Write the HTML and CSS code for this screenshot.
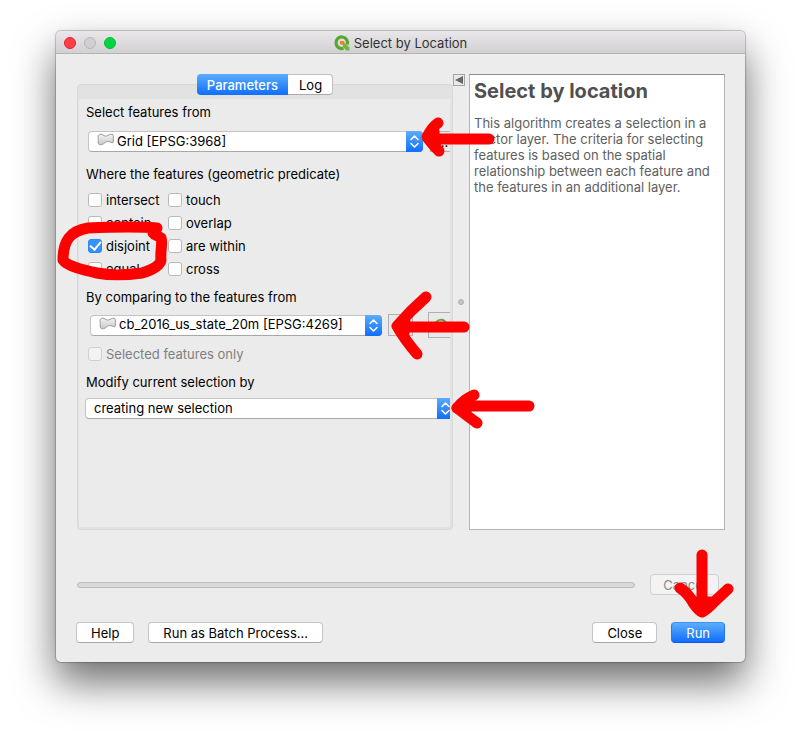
FILE: index.html
```html
<!DOCTYPE html>
<html lang="en">
<head>
<meta charset="utf-8">
<title>Select by Location</title>
<link rel="stylesheet" href="styles.css">
</head>
<body>
<svg class="defs" aria-hidden="true">
  <defs>
    <linearGradient id="poly-fill" x1="0" y1="0" x2="0" y2="1"><stop offset="0" stop-color="#f4f4f4"/><stop offset="1" stop-color="#c6c6c6"/></linearGradient>
    <symbol id="polygon" viewBox="0 0 17 13"><path d="M1.5 2.2C3 .8 5 1 6 2c1.500 1.300 3.500 1.300 5 .5 1.500-1.200 4-1.700 5-.7.8 1 .3 3 .2 4.200.2 1.300.6 3-.2 3.600-1.500.6-2.500-.8-4-1-2-.2-3.200.4-4.500 1.400C6 11.500 3.500 12.300 2 11.300.6 10 1.300 8 1.300 6.500 1.200 5 .7 3.200 1.500 2.200z" fill="url(#poly-fill)" stroke="#999"/></symbol>
    <symbol id="updown" viewBox="0 0 17 21"><path d="M5 8.500 8.500 5 12 8.500M5 12.500 8.500 16 12 12.500" fill="none" stroke="#fff" stroke-width="1.500" stroke-linecap="round" stroke-linejoin="round"/></symbol>
  </defs>
</svg>
<main class="window">
  <header class="titlebar">
    <div class="lights">
      <button class="light red" aria-label="Close window"></button>
      <button class="light gray" aria-label="Minimize" disabled></button>
      <button class="light green" aria-label="Zoom"></button>
    </div>
    <h1 class="title">
      <svg class="logo" viewBox="0 0 16 16" aria-hidden="true">
        <path d="M9.500 13.300A5.800 5.800 0 1 1 13.300 9.500" fill="none" stroke="#58a732" stroke-width="3.200"/>
        <path d="M9 8.500h2.500l4 4V15.500h-3.200L9 12z" fill="#72b83b"/>
        <path d="M6 6h3.500l1 1v3H9L6 9z" fill="#ef8125"/>
      </svg>
      Select by Location
    </h1>
  </header>
  <div class="content">
    <div class="panels">
      <section class="left">
        <div class="tabs" role="tablist">
          <button class="tab active" role="tab" aria-selected="true">Parameters</button>
          <button class="tab" role="tab" aria-selected="false">Log</button>
        </div>
        <div class="pane">
          <form class="form">
            <label class="caption" for="source">Select features from</label>
            <div class="row source-row">
              <div class="combo">
                <svg class="poly"><use href="#polygon"/></svg>
                <select id="source" class="with-icon"><option>Grid [EPSG:3968]</option></select>
                <span class="arrows"><svg><use href="#updown"/></svg></span>
              </div>
              <button type="button" class="tool short" aria-label="Browse for a layer">…</button>
            </div>
            <div class="caption predicates-caption" id="predicates">Where the features (geometric predicate)</div>
            <div class="checks" role="group" aria-labelledby="predicates">
              <label class="check"><input type="checkbox">intersect</label>
              <label class="check"><input type="checkbox">touch</label>
              <label class="check"><input type="checkbox">contain</label>
              <label class="check"><input type="checkbox">overlap</label>
              <label class="check"><input type="checkbox" checked>disjoint</label>
              <label class="check"><input type="checkbox">are within</label>
              <label class="check"><input type="checkbox">equal</label>
              <label class="check"><input type="checkbox">cross</label>
            </div>
            <label class="caption compare-caption" for="compare">By comparing to the features from</label>
            <div class="row compare-row">
              <div class="combo">
                <svg class="poly"><use href="#polygon"/></svg>
                <select id="compare" class="with-icon"><option>cb_2016_us_state_20m [EPSG:4269]</option></select>
                <span class="arrows"><svg><use href="#updown"/></svg></span>
              </div>
              <button type="button" class="tool" aria-label="Browse for a comparison layer">…</button>
              <button type="button" class="tool tall" aria-label="Iterate over this layer">
                <svg class="iterate" viewBox="0 0 16 16"><path d="M2.500 8A5.500 5.500 0 0 1 13 6" fill="none" stroke="#5ba645" stroke-width="2"/><path d="M1 8h6l-3 4z" fill="#775522"/></svg>
              </button>
            </div>
            <label class="check only"><input type="checkbox" disabled>Selected features only</label>
            <label class="caption modify-caption" for="modify">Modify current selection by</label>
            <div class="combo modify">
              <select id="modify"><option>creating new selection</option></select>
              <span class="arrows"><svg><use href="#updown"/></svg></span>
            </div>
          </form>
        </div>
      </section>
      <div class="splitter">
        <button class="collapse" aria-label="Collapse help"><svg viewBox="0 0 10 10"><path d="M9 1v8L1 5z" fill="#666"/></svg></button>
        <span class="grip"></span>
      </div>
      <article class="help">
        <h2>Select by location</h2>
        <p>This algorithm creates a selection in a vector layer. The criteria for selecting features is based on the spatial relationship between each feature and the features in an additional layer.</p>
      </article>
    </div>
    <div class="progress-row">
      <div class="progress" role="progressbar" aria-label="Progress" aria-valuenow="0"></div>
      <button class="btn cancel" disabled>Cancel</button>
    </div>
    <footer class="actions">
      <button class="btn">Help</button>
      <button class="btn">Run as Batch Process…</button>
      <span class="spacer"></span>
      <button class="btn">Close</button>
      <button class="btn primary">Run</button>
    </footer>
  </div>
  <svg class="marks" viewBox="0 0 689 631" aria-hidden="true">
    <g transform="translate(-56 -31)" fill="none" stroke="#f00" stroke-width="11" stroke-linecap="round" stroke-linejoin="round">
      <path d="M489 139H430M438 123Q432 127 427 137Q431 143 439 151"/>
      <path d="M434 131 428 138 435 146z" fill="#f00"/>
      <path d="M464 327H400M426 297Q410 311 397 326Q405 340 417 354"/>
      <path d="M405 322 398 326 404 333z" fill="#f00"/>
      <path d="M529 406H460M474 395Q463 400 457 408Q466 415 477 423"/>
      <path d="M466 402 457 408 466 412z" fill="#f00"/>
      <path d="M702 555V609M680 588Q688 593 694 604Q699 611 702 612Q708 609 714 602L728 589"/>
      <path d="M695 602 702 611 711 602z" fill="#f00"/>
      <path d="M157 228C135 226 110 227 88 228C70 231 63 241 63 260C67 266 83 270 97 273C112 276 128 275 142 273C152 270 160 266 161 260C160 250 163 243 161 238C158 235 155 236 153 233"/>
    </g>
  </svg>
</main>
</body>
</html>
```

FILE: styles.css
```css
* { box-sizing: border-box; }

body {
  margin: 0;
  min-height: 100vh;
  padding: 31px 56px 80px;
  display: flex;
  background: #fff;
  color: #000;
  font: 13px/16px Inter, "Liberation Sans", sans-serif;
}

button, select { font: inherit; color: inherit; margin: 0; }
svg { display: block; }
.defs { position: absolute; width: 0; height: 0; }

.window {
  position: relative;
  flex: 1;
  min-width: 0;
  display: flex;
  flex-direction: column;
  border-radius: 5px;
  background: #ececec;
  box-shadow: 0 0 1px 1px rgba(0, 0, 0, .22), 0 20px 40px rgba(0, 0, 0, .58);
}

.titlebar {
  position: relative;
  height: 23px;
  display: flex;
  align-items: center;
  justify-content: center;
  padding-top: 2px;
  border-bottom: 1px solid #b5b3b5;
  border-radius: 5px 5px 0 0;
  background: linear-gradient(#e9e7e9, #d2d0d2);
}
.lights { position: absolute; left: 8px; top: 6px; display: flex; gap: 8px; }
.light { width: 12px; height: 12px; padding: 0; border: 1px solid; border-radius: 50%; }
.red { background: #ff4048; border-color: #e5222d; }
.gray { background: #d1cfd1; border-color: #b8b6b8; }
.green { background: #00d543; border-color: #0bb932; }
.title { margin: 0; display: flex; align-items: center; gap: 4px; font-size: 13px; font-weight: 400; color: #333; }
.logo { width: 16px; height: 16px; }

.content { flex: 1; display: flex; flex-direction: column; padding: 20px 20px 19px 21px; }
.panels { flex: 1; display: grid; grid-template-columns: minmax(0, 376fr) 16px minmax(0, 256fr); }
.left { display: flex; flex-direction: column; }

.tabs { position: relative; z-index: 1; display: flex; align-self: center; margin-bottom: -11px; }
.tab {
  height: 21px;
  padding: 0 10px 0 11px;
  border: 1px solid #c0c0c0;
  border-left: 0;
  border-bottom-color: #aaa;
  border-radius: 0 4px 4px 0;
  background: #fff;
}
.tab.active {
  padding: 0 10px;
  border: 0;
  border-radius: 4px 0 0 4px;
  font-weight: 500;
  color: #fff;
  background: linear-gradient(#5cadfb, #0f6efd);
}

.pane { flex: 1; display: flex; padding: 14px 2px 2px 1px; border: 1px solid #d9d9d9; border-radius: 4px; background: #e2e2e2; }
.form { flex: 1; min-width: 0; padding: 5px 0 0 7px; overflow: hidden; background: #ebebeb; }
.caption { display: block; }
.predicates-caption { margin-top: 14px; }
.compare-caption { margin-top: 9px; }
.modify-caption { margin-top: 12px; }

.row { display: flex; align-items: center; }
.source-row { margin: 11px -5px 0 2px; gap: 7px; }
.compare-row { margin: 7px -3px 0 4px; gap: 6px; }
.combo { position: relative; flex: 1; min-width: 0; }
.combo select {
  appearance: none;
  display: block;
  width: 100%;
  height: 21px;
  padding: 0 20px 2px 8px;
  border: 1px solid #c4c4c4;
  border-bottom-color: #a8a8a8;
  border-radius: 4px;
  background: #fff;
}
.combo select.with-icon { padding-left: 28px; }
.modify { margin: 8px -4px 0 -1px; }
.poly { position: absolute; left: 9px; top: 2px; width: 17px; height: 13px; }
.arrows {
  position: absolute;
  right: 0;
  top: 0;
  width: 17px;
  height: 21px;
  border-radius: 0 4px 4px 0;
  background: linear-gradient(#5cadfb, #0f6efd);
  pointer-events: none;
}
.arrows svg { width: 17px; height: 21px; }
.tool { width: 25px; height: 22px; padding: 0; border: 1px solid #b0b0b0; background: #e9e9e9; display: grid; place-items: center; }
.short { height: 21px; }
.tall { height: 26px; margin-left: 9px; }
.iterate { width: 16px; height: 16px; }

.checks { display: grid; grid-template-columns: 80px 1fr; grid-auto-rows: 23px; margin: 6px 0 0 2px; }
.check { display: flex; align-items: center; gap: 4px; }
.check input {
  appearance: none;
  width: 14px;
  height: 14px;
  margin: 0;
  border: 1px solid #b9b9b9;
  border-radius: 3px;
  background: #fff;
}
.check input:checked {
  border-color: #2d87f5;
  background: #3791fb;
  display: grid;
  place-items: center;
}
.check input:checked::before {
  content: "";
  width: 5px;
  height: 9px;
  margin-top: -2px;
  border: solid #fff;
  border-width: 0 2px 2px 0;
  transform: rotate(40deg);
}
.only { margin: 8px 0 0 2px; color: #7f7f7f; }
.check input:disabled { border-color: #cecece; background: #f3f3f3; }

.splitter { position: relative; display: grid; place-items: center; }
.collapse { position: absolute; left: 0; top: 0; width: 12px; height: 12px; padding: 0; border: 1px solid #a5a5a5; background: #e9e9e9; }
.grip { width: 6px; height: 6px; border: 1px solid #b0b0b0; border-radius: 50%; background: #c4c4c4; }

.help { padding: 4px 4px; border: 1px solid #b4b4b4; border-top-color: #8f8f8f; background: #fff; color: #606060; }
.help h2 { margin: 0; font-size: 20px; line-height: 24px; font-weight: 700; color: #505050; }
.help p { margin: 12px 0 0; }

.progress-row { display: flex; align-items: center; gap: 15px; margin: 44px 6px 0 0; }
.progress { flex: 1; height: 6px; border: 1px solid #bdbdbd; border-radius: 3px; background: #d9d9d9; }
.actions { display: flex; gap: 14px; margin: 27px 0 0 -1px; }
.spacer { flex: 1; }
.btn {
  height: 21px;
  padding: 0 14px;
  border: 1px solid #c4c4c4;
  border-bottom-color: #a8a8a8;
  border-radius: 4px;
  background: #fff;
  line-height: 18px;
}
.cancel { padding: 0 12px; }
.btn:disabled { border-color: #d0d0d0; background: #f3f3f3; color: #8a8a8a; }
.btn.primary { border-color: #3b93f6 #1f78f8 #0f57f5; background: linear-gradient(#5cadfb, #0f6efd); color: #fff; }

.marks { position: absolute; left: 0; top: 0; width: 689px; height: 631px; overflow: visible; pointer-events: none; }
```
